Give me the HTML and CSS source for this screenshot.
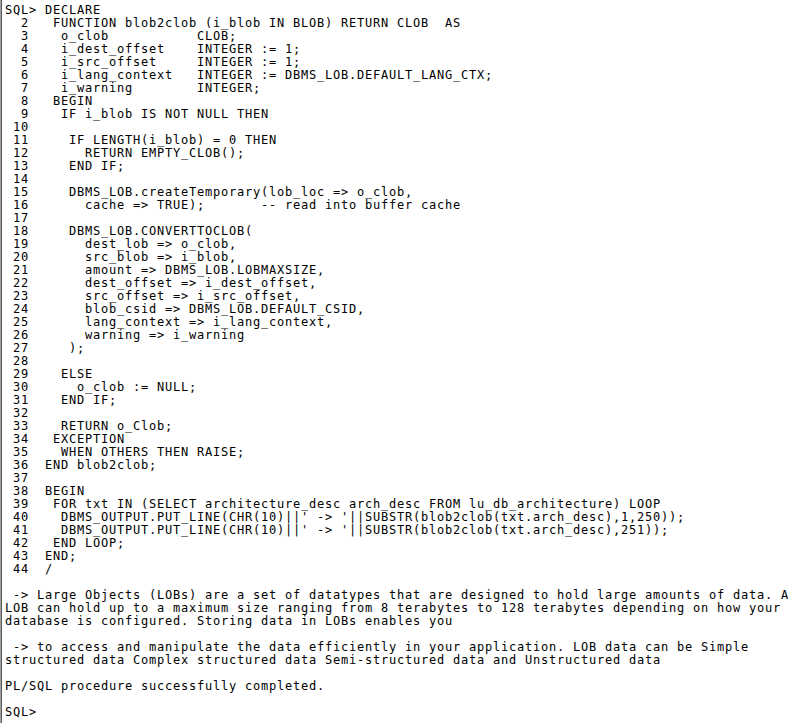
FILE: index.html
```html
<!DOCTYPE html>
<html>
<head>
<meta charset="utf-8">
<link rel="stylesheet" href="styles.css">
</head>
<body>
<div class="console">
<pre class="screen">SQL&gt; DECLARE
  2   FUNCTION blob2clob (i_blob IN BLOB) RETURN CLOB  AS
  3    o_clob           CLOB;
  4    i_dest_offset    INTEGER := 1;
  5    i_src_offset     INTEGER := 1;
  6    i_lang_context   INTEGER := DBMS_LOB.DEFAULT_LANG_CTX;
  7    i_warning        INTEGER;
  8   BEGIN
  9    IF i_blob IS NOT NULL THEN
 10
 11     IF LENGTH(i_blob) = 0 THEN
 12       RETURN EMPTY_CLOB();
 13     END IF;
 14
 15     DBMS_LOB.createTemporary(lob_loc =&gt; o_clob,
 16       cache =&gt; TRUE);       -- read into buffer cache
 17
 18     DBMS_LOB.CONVERTTOCLOB(
 19       dest_lob =&gt; o_clob,
 20       src_blob =&gt; i_blob,
 21       amount =&gt; DBMS_LOB.LOBMAXSIZE,
 22       dest_offset =&gt; i_dest_offset,
 23       src_offset =&gt; i_src_offset,
 24       blob_csid =&gt; DBMS_LOB.DEFAULT_CSID,
 25       lang_context =&gt; i_lang_context,
 26       warning =&gt; i_warning
 27     );
 28
 29    ELSE
 30      o_clob := NULL;
 31    END IF;
 32
 33    RETURN o_Clob;
 34   EXCEPTION
 35    WHEN OTHERS THEN RAISE;
 36  END blob2clob;
 37
 38  BEGIN
 39   FOR txt IN (SELECT architecture_desc arch_desc FROM lu_db_architecture) LOOP
 40    DBMS_OUTPUT.PUT_LINE(CHR(10)||' -&gt; '||SUBSTR(blob2clob(txt.arch_desc),1,250));
 41    DBMS_OUTPUT.PUT_LINE(CHR(10)||' -&gt; '||SUBSTR(blob2clob(txt.arch_desc),251));
 42   END LOOP;
 43  END;
 44  /

 -&gt; Large Objects (LOBs) are a set of datatypes that are designed to hold large amounts of data. A
LOB can hold up to a maximum size ranging from 8 terabytes to 128 terabytes depending on how your
database is configured. Storing data in LOBs enables you

 -&gt; to access and manipulate the data efficiently in your application. LOB data can be Simple
structured data Complex structured data Semi-structured data and Unstructured data

PL/SQL procedure successfully completed.

SQL&gt;</pre>
</div>
</body>
</html>
```

FILE: styles.css
```css
html, body {
  margin: 0;
  padding: 0;
  background: #ffffff;
}

.console {
  height: 723px;
  box-sizing: border-box;
  border-left: 1px solid #a0a0a0;
  overflow: hidden;
}

.screen {
  margin: 0;
  height: 100%;
  box-sizing: border-box;
  border-left: 1px solid #5a5a5a;
  padding: 4px 0 0 3px;
  font-family: "DejaVu Sans Mono", monospace;
  font-size: 12px;
  letter-spacing: 0.776px;
  line-height: 13px;
  color: #000000;
  white-space: pre;
}
```
